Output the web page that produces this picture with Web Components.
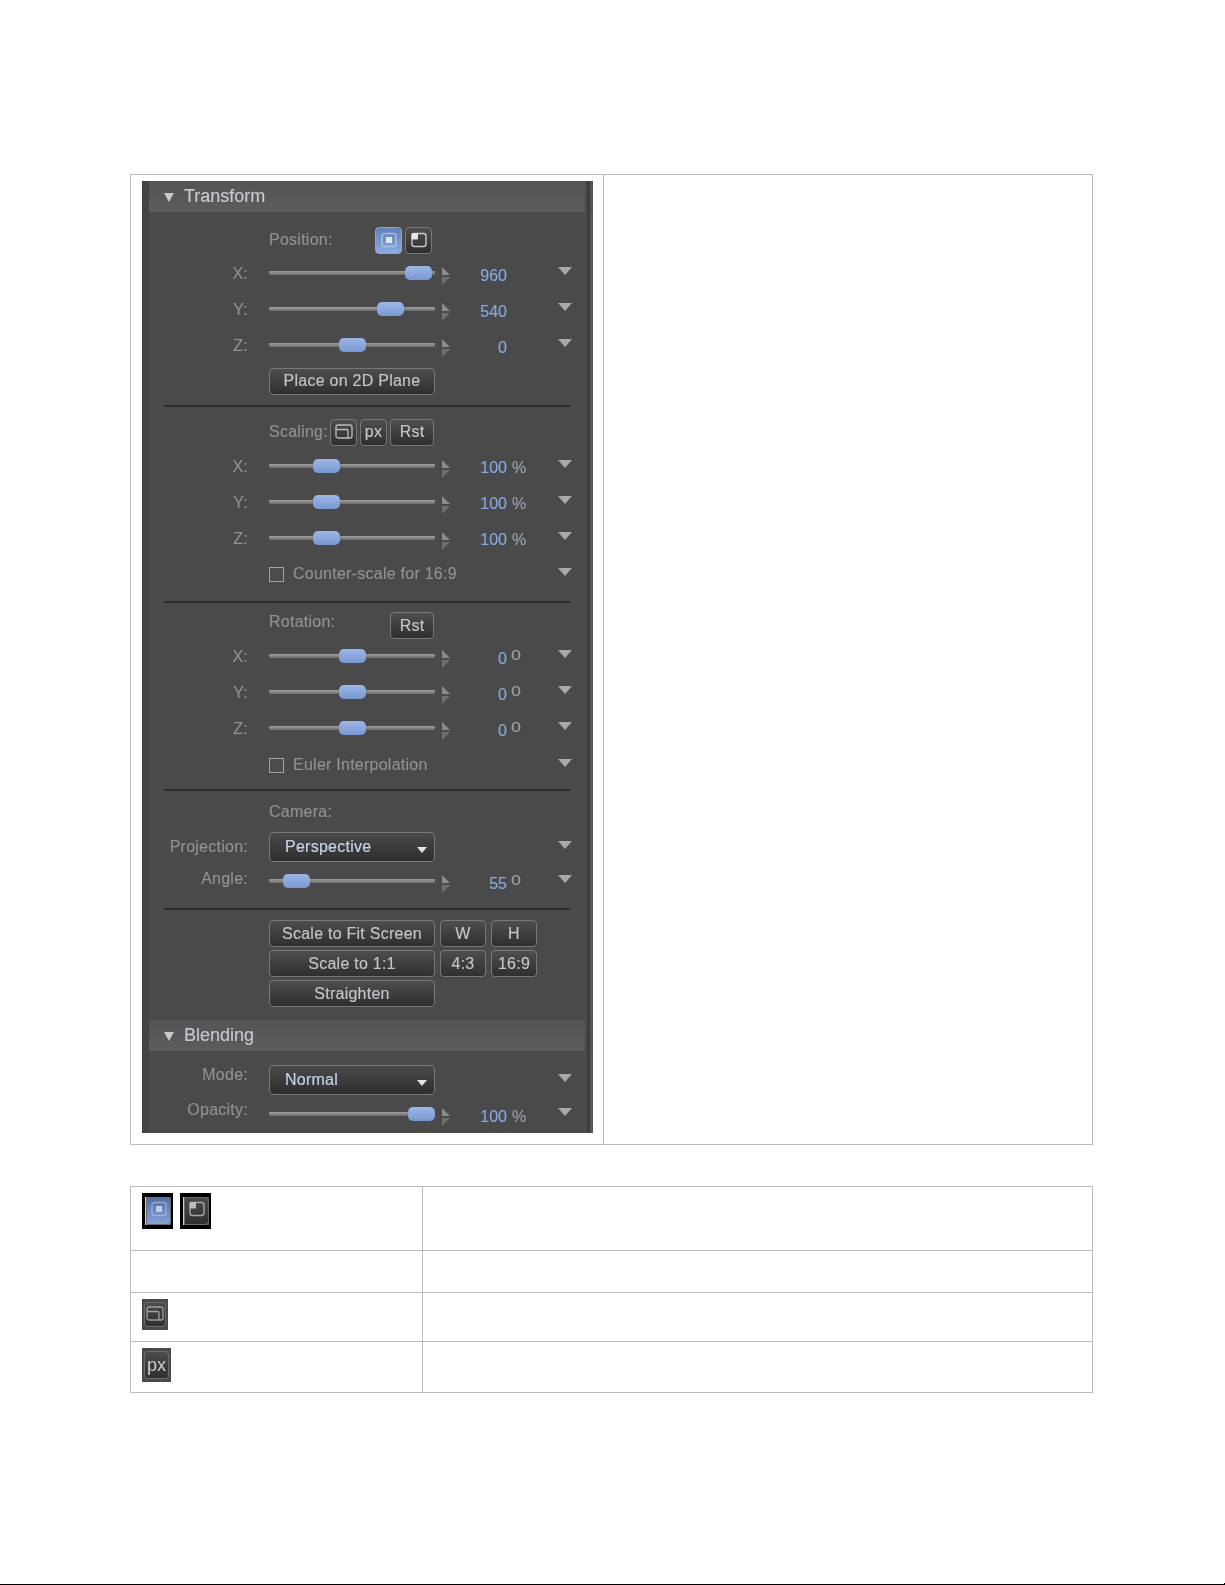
<!DOCTYPE html>
<html lang="en">
<head>
<meta charset="utf-8">
<title>Transform panel</title>
<style>
  html, body { margin: 0; padding: 0; background: #fff; }
  body { font-family: "Liberation Sans", Arial, sans-serif; overflow: hidden; }
</style>
</head>
<body>
<doc-page>
  <doc-table cols="473px 1fr" rows="970px" style="--pad:6px 11px">
    <doc-cell>
      <fx-panel>
        <fx-header>Transform</fx-header>

        <fx-row h="30" style="margin-top:13px">
          <fx-label slot="control" style="width:106px">Position:</fx-label>
          <fx-button slot="control" style="width:27px" active><fx-glyph type="center"></fx-glyph></fx-button>
          <fx-button slot="control" style="width:27px;margin-left:3px"><fx-glyph type="corner"></fx-glyph></fx-button>
        </fx-row>
        <fx-slider-row label="X:" pos="136" value="960"></fx-slider-row>
        <fx-slider-row label="Y:" pos="108" value="540"></fx-slider-row>
        <fx-slider-row label="Z:" pos="70" value="0"></fx-slider-row>
        <fx-row h="36"><fx-button slot="control" style="width:166px">Place on 2D Plane</fx-button></fx-row>
        <fx-rule style="margin-top:6px"></fx-rule>

        <fx-row h="32" style="margin-top:9px">
          <fx-label slot="control" style="width:61px">Scaling:</fx-label>
          <fx-button slot="control" style="width:27px"><fx-glyph type="fit"></fx-glyph></fx-button>
          <fx-button slot="control" style="width:27px;margin-left:3px">px</fx-button>
          <fx-button slot="control" style="width:44px;margin-left:3px">Rst</fx-button>
        </fx-row>
        <fx-slider-row label="X:" pos="44" value="100" unit="%" vp="3"></fx-slider-row>
        <fx-slider-row label="Y:" pos="44" value="100" unit="%" vp="3"></fx-slider-row>
        <fx-slider-row label="Z:" pos="44" value="100" unit="%" vp="3"></fx-slider-row>
        <fx-row h="36" menu><fx-check slot="control">Counter-scale for 16:9</fx-check></fx-row>
        <fx-rule style="margin-top:9px"></fx-rule>

        <fx-row h="26" style="margin-top:9px">
          <fx-label slot="control" style="width:121px;margin-bottom:8px">Rotation:</fx-label>
          <fx-button slot="control" style="width:44px">Rst</fx-button>
        </fx-row>
        <fx-slider-row label="X:" pos="70" value="0" unit="o"></fx-slider-row>
        <fx-slider-row label="Y:" pos="70" value="0" unit="o"></fx-slider-row>
        <fx-slider-row label="Z:" pos="70" value="0" unit="o"></fx-slider-row>
        <fx-row h="38" menu><fx-check slot="control">Euler Interpolation</fx-check></fx-row>
        <fx-rule style="margin-top:5px"></fx-rule>

        <fx-row h="28" style="margin-top:7px"><fx-label slot="control">Camera:</fx-label></fx-row>
        <fx-row h="42" label="Projection:" menu lift="1"><fx-select slot="control">Perspective</fx-select></fx-row>
        <fx-slider-row h="26" label="Angle:" pos="14" value="55" unit="o" lift="5"></fx-slider-row>
        <fx-rule style="margin-top:14px"></fx-rule>

        <fx-row h="27" style="margin-top:10px">
          <fx-button slot="control" style="width:166px">Scale to Fit Screen</fx-button>
          <fx-button slot="control" style="width:46px;margin-left:5px">W</fx-button>
          <fx-button slot="control" style="width:46px;margin-left:5px">H</fx-button>
        </fx-row>
        <fx-row h="27" style="margin-top:3px">
          <fx-button slot="control" style="width:166px">Scale to 1:1</fx-button>
          <fx-button slot="control" style="width:46px;margin-left:5px">4:3</fx-button>
          <fx-button slot="control" style="width:46px;margin-left:5px">16:9</fx-button>
        </fx-row>
        <fx-row h="27" style="margin-top:3px"><fx-button slot="control" style="width:166px">Straighten</fx-button></fx-row>

        <fx-header style="margin-top:13px">Blending</fx-header>
        <fx-row h="30" label="Mode:" menu lift="10" style="margin-top:14px"><fx-select slot="control">Normal</fx-select></fx-row>
        <fx-slider-row h="34" label="Opacity:" pos="139" value="100" unit="%" lift="8" style="margin-top:2px"></fx-slider-row>
      </fx-panel>
    </doc-cell>
    <doc-cell></doc-cell>
  </doc-table>

  <doc-table cols="292px 1fr" rows="64px 42px 49px 51px" style="--pad:6px 11px;margin-top:41px">
    <doc-cell>
      <doc-swatch framed active type="center"></doc-swatch>
      <doc-swatch framed type="corner" style="margin-left:3px"></doc-swatch>
    </doc-cell>
    <doc-cell></doc-cell>
    <doc-cell></doc-cell>
    <doc-cell></doc-cell>
    <doc-cell><doc-swatch type="fit" style="width:26px;height:31px"></doc-swatch></doc-cell>
    <doc-cell></doc-cell>
    <doc-cell><doc-swatch style="width:29px;height:34px">px</doc-swatch></doc-cell>
    <doc-cell></doc-cell>
  </doc-table>
</doc-page>

<script>
const FONT = '"Liberation Sans", Arial, sans-serif';

const GLYPHS = {
  center: `<rect x="2" y="1.5" width="14" height="13" rx="2.5" fill="none" stroke="#c4cfe6" stroke-opacity=".7" stroke-width="1.4"/><rect x="6" y="5" width="6" height="6" fill="#dfe6f2"/>`,
  corner: `<rect x="2" y="1.5" width="14" height="13" rx="2.5" fill="none" stroke="#c8c8c8" stroke-width="1.4"/><rect x="1.5" y="1" width="6.5" height="6.5" rx="1" fill="#e6e6e6"/>`,
  fit: `<path d="M1 5.5V3a2 2 0 0 1 2-2h12a2 2 0 0 1 2 2v9a2 2 0 0 1-2 2H3a2 2 0 0 1-2-2V5.5H11.5a1.5 1.5 0 0 1 1.5 1.5V14" fill="none" stroke="#bdbdbd" stroke-width="1.3"/>`
};

class DocPage extends HTMLElement {
  constructor() {
    super();
    this.attachShadow({ mode: "open" });
    this.shadowRoot.innerHTML = `
      <style>
        :host { display: block; width: 1225px; height: 1585px; box-sizing: border-box; padding: 174px 132px 0 130px; position: relative; }
        .rule { position: absolute; left: 0; right: 0; bottom: 0; height: 1px; background: #000; }
        .rule::after { content: ""; position: absolute; right: 0; top: -1px; width: 1px; height: 1px; background: #000; }
      </style>
      <slot></slot>
      <div class="rule"></div>
    `;
  }
}

class DocTable extends HTMLElement {
  constructor() {
    super();
    this.attachShadow({ mode: "open" });
  }
  connectedCallback() {
    this.shadowRoot.innerHTML = `
      <style>
        :host {
          display: grid;
          grid-template-columns: ${this.getAttribute("cols")};
          grid-template-rows: ${this.getAttribute("rows")};
          border-top: 1px solid #bdbdbd;
          border-left: 1px solid #bdbdbd;
        }
      </style>
      <slot></slot>
    `;
  }
}

class DocCell extends HTMLElement {
  constructor() {
    super();
    this.attachShadow({ mode: "open" });
    this.shadowRoot.innerHTML = `
      <style>
        :host {
          display: block;
          box-sizing: border-box;
          padding: var(--pad);
          border-right: 1px solid #bdbdbd;
          border-bottom: 1px solid #bdbdbd;
          min-width: 0;
        }
      </style>
      <slot></slot>
    `;
  }
}

class DocSwatch extends HTMLElement {
  constructor() {
    super();
    this.attachShadow({ mode: "open" });
  }
  connectedCallback() {
    const type = this.getAttribute("type");
    const framed = this.hasAttribute("framed");
    const active = this.hasAttribute("active");
    this.shadowRoot.innerHTML = `
      <style>
        :host {
          display: inline-flex;
          box-sizing: border-box;
          vertical-align: top;
          width: 31px;
          height: 36px;
          background: #4a4a4a;
          filter: blur(.5px);
          ${framed ? "border: solid #000; border-width: 4px 2px 4px 3px;" : "padding: 3px 2px;"}
        }
        .face {
          flex: 1;
          display: flex;
          align-items: center;
          justify-content: center;
          border-radius: 4px;
          box-shadow: inset 0 0 0 1px #6c6c6c;
          background: ${active ? "linear-gradient(#4e6ca4, #88a4da)" : "linear-gradient(#4c4c4c, #2e2e2e)"};
          ${framed ? "border-left: 1px solid #cfcfcf; border-radius: 0 4px 4px 0;" : ""}
          font: 18px ${FONT};
          color: #c9d2da;
        }
        svg { width: 18px; height: 16px; margin-bottom: ${framed ? 4 : 2}px; opacity: .75; }
      </style>
      <div class="face">${type ? `<svg viewBox="0 0 18 16">${GLYPHS[type]}</svg>` : "<slot></slot>"}</div>
    `;
  }
}

class FxPanel extends HTMLElement {
  constructor() {
    super();
    this.attachShadow({ mode: "open" });
    this.shadowRoot.innerHTML = `
      <style>
        :host {
          display: block;
          box-sizing: border-box;
          width: 451px;
          height: 952px;
          padding: 0 8px 0 7px;
          background: #4a4a4a;
          font: 16px ${FONT};
          letter-spacing: .25px;
          -webkit-text-stroke: .15px;
          color: #909192;
          filter: blur(.45px);
          position: relative;
          overflow: hidden;
        }
        .edge { position: absolute; top: 0; bottom: 0; left: 0; width: 7px; background: #444; }
        .bar { position: absolute; top: 0; bottom: 0; right: 0; width: 6px; box-sizing: border-box; background: #565656; border-left: 3px solid #3d3d3d; }
      </style>
      <div class="edge"></div>
      <slot></slot>
      <div class="bar"></div>
    `;
  }
}

class FxHeader extends HTMLElement {
  constructor() {
    super();
    this.attachShadow({ mode: "open" });
    this.shadowRoot.innerHTML = `
      <style>
        :host {
          display: flex;
          align-items: center;
          height: 31px;
          padding-left: 15px;
          background: linear-gradient(#545454, #5c5c5c);
          font-size: 18px;
          letter-spacing: 0;
          color: #c6cad0;
        }
        i { width: 0; height: 0; margin: 2px 10px 0 0; border: 5px solid transparent; border-top: 9px solid #c8c8c8; border-bottom: 0; }
      </style>
      <i></i><slot></slot>
    `;
  }
}

class FxRule extends HTMLElement {
  constructor() {
    super();
    this.attachShadow({ mode: "open" });
    this.shadowRoot.innerHTML = `
      <style>
        :host { display: block; height: 2px; margin-left: 15px; margin-right: 15px; background: #2b2b2b; }
      </style>
    `;
  }
}

class FxLabel extends HTMLElement {
  constructor() {
    super();
    this.attachShadow({ mode: "open" });
    this.shadowRoot.innerHTML = `
      <style>:host { display: block; flex: none; color: #909192; }</style>
      <slot></slot>
    `;
  }
}

const rowGrid = `
  :host {
    display: grid;
    grid-template-columns: 120px 166px 20px 52px 28px 1fr;
    align-items: center;
    padding-right: 13px;
  }
  .label { text-align: right; padding-right: 21px; grid-column: 1; color: #909192; white-space: nowrap; }
  .menu {
    grid-column: 6;
    justify-self: end;
    width: 0;
    height: 0;
    margin-bottom: 4px;
    border: 7px solid transparent;
    border-top: 8px solid #a9a9a9;
    border-bottom: 0;
  }
`;

class FxRow extends HTMLElement {
  constructor() {
    super();
    this.attachShadow({ mode: "open" });
  }
  connectedCallback() {
    const h = this.getAttribute("h") || 36;
    const label = this.getAttribute("label");
    this.shadowRoot.innerHTML = `
      <style>
        ${rowGrid}
        :host { height: ${h}px; }
        .label { padding-bottom: ${this.getAttribute("lift") || 0}px; }
        .control { grid-column: 2 / 6; display: flex; align-items: center; }
      </style>
      <div class="label">${label || ""}</div>
      <div class="control"><slot name="control"></slot></div>
      ${this.hasAttribute("menu") ? '<div class="menu"></div>' : ""}
    `;
  }
}

class FxSliderRow extends HTMLElement {
  constructor() {
    super();
    this.attachShadow({ mode: "open" });
  }
  static get observedAttributes() {
    return ["label", "pos", "value", "unit"];
  }
  attributeChangedCallback(attr, oldVal, newVal) {
    if (this.isConnected) this.render();
  }
  getTemplate() {
    const unit = this.getAttribute("unit") || "";
    return `
      <div class="label">${this.getAttribute("label")}</div>
      <div class="track"><div class="thumb"></div></div>
      <svg class="step" width="8" height="18" viewBox="0 0 8 18">
        <path d="M0 0 8 8H0Z" fill="#8b8b8b"/><path d="M0 10H8L0 18Z" fill="#6f6f6f"/>
      </svg>
      <div class="value">${this.getAttribute("value")}</div>
      <div class="unit ${unit === "o" ? "deg" : ""}">${unit}</div>
      <div class="menu"></div>
    `;
  }
  getStyles() {
    const lift = this.getAttribute("lift");
    const vp = this.getAttribute("vp") || 5;
    return `
      <style>
        ${rowGrid}
        :host { height: ${this.getAttribute("h") || 36}px; }
        .label { ${lift ? `padding-bottom: ${lift}px;` : "padding-top: 2px;"} }
        .track {
          height: 4px;
          background: linear-gradient(#a0a0a0, #6c6c6c);
          border-radius: 1px;
          position: relative;
        }
        .thumb {
          position: absolute;
          left: ${this.getAttribute("pos")}px;
          top: -5px;
          width: 27px;
          height: 14px;
          box-sizing: border-box;
          border-radius: 5px;
          background: linear-gradient(#9db6e6, #7998d2);
          box-shadow: 0 0 1px #3a4a6a;
        }
        .step { margin: 5px 0 0 7px; }
        .value { text-align: right; color: #86a7df; padding-top: ${vp}px; letter-spacing: 0; }
        .unit { color: #9aa1ab; padding: ${vp}px 0 0 5px; letter-spacing: 0; }
        .deg { font-size: 18px; line-height: 1; padding: 0 0 5px 4px; color: #9c9c9c; }
      </style>
    `;
  }
  render() {
    this.shadowRoot.innerHTML = this.getStyles() + this.getTemplate();
  }
  connectedCallback() {
    this.render();
  }
}

class FxButton extends HTMLElement {
  constructor() {
    super();
    this.attachShadow({ mode: "open" });
    this.shadowRoot.innerHTML = `
      <style>
        :host {
          display: inline-flex;
          flex: none;
          align-items: center;
          justify-content: center;
          box-sizing: border-box;
          height: 27px;
          border: 1px solid #787878;
          border-radius: 4px;
          background: linear-gradient(#4e4e4e, #2f2f2f);
          color: #c2c6ca;
          white-space: nowrap;
        }
        :host([active]) { background: linear-gradient(#5f7fb8, #8dabe2); border-color: #8fa5cc; }
      </style>
      <slot></slot>
    `;
  }
}

class FxGlyph extends HTMLElement {
  constructor() {
    super();
    this.attachShadow({ mode: "open" });
  }
  connectedCallback() {
    this.shadowRoot.innerHTML = `
      <style>:host { display: inline-flex; } svg { width: 18px; height: 16px; }</style>
      <svg viewBox="0 0 18 16">${GLYPHS[this.getAttribute("type")]}</svg>
    `;
  }
}

class FxSelect extends HTMLElement {
  constructor() {
    super();
    this.attachShadow({ mode: "open" });
    this.shadowRoot.innerHTML = `
      <style>
        :host {
          display: flex;
          align-items: center;
          justify-content: space-between;
          box-sizing: border-box;
          width: 166px;
          height: 30px;
          padding: 0 7px 0 15px;
          border: 1px solid #787878;
          border-radius: 4px;
          background: linear-gradient(#4a4a4a, #2e2e2e);
          color: #c6d5ee;
        }
        i { width: 0; height: 0; margin-top: 5px; border: 5px solid transparent; border-top: 6px solid #e4e4e4; border-bottom: 0; }
      </style>
      <slot></slot><i></i>
    `;
  }
}

class FxCheck extends HTMLElement {
  constructor() {
    super();
    this.attachShadow({ mode: "open" });
    this.shadowRoot.innerHTML = `
      <style>
        :host { display: flex; align-items: center; color: #909192; white-space: nowrap; }
        i { width: 15px; height: 15px; box-sizing: border-box; margin-right: 9px; border: 1px solid #a2a2a2; background: #4c4c4c; }
      </style>
      <i></i><slot></slot>
    `;
  }
}

customElements.define("doc-page", DocPage);
customElements.define("doc-table", DocTable);
customElements.define("doc-cell", DocCell);
customElements.define("doc-swatch", DocSwatch);
customElements.define("fx-panel", FxPanel);
customElements.define("fx-header", FxHeader);
customElements.define("fx-rule", FxRule);
customElements.define("fx-label", FxLabel);
customElements.define("fx-row", FxRow);
customElements.define("fx-slider-row", FxSliderRow);
customElements.define("fx-button", FxButton);
customElements.define("fx-glyph", FxGlyph);
customElements.define("fx-select", FxSelect);
customElements.define("fx-check", FxCheck);
</script>
</body>
</html>
